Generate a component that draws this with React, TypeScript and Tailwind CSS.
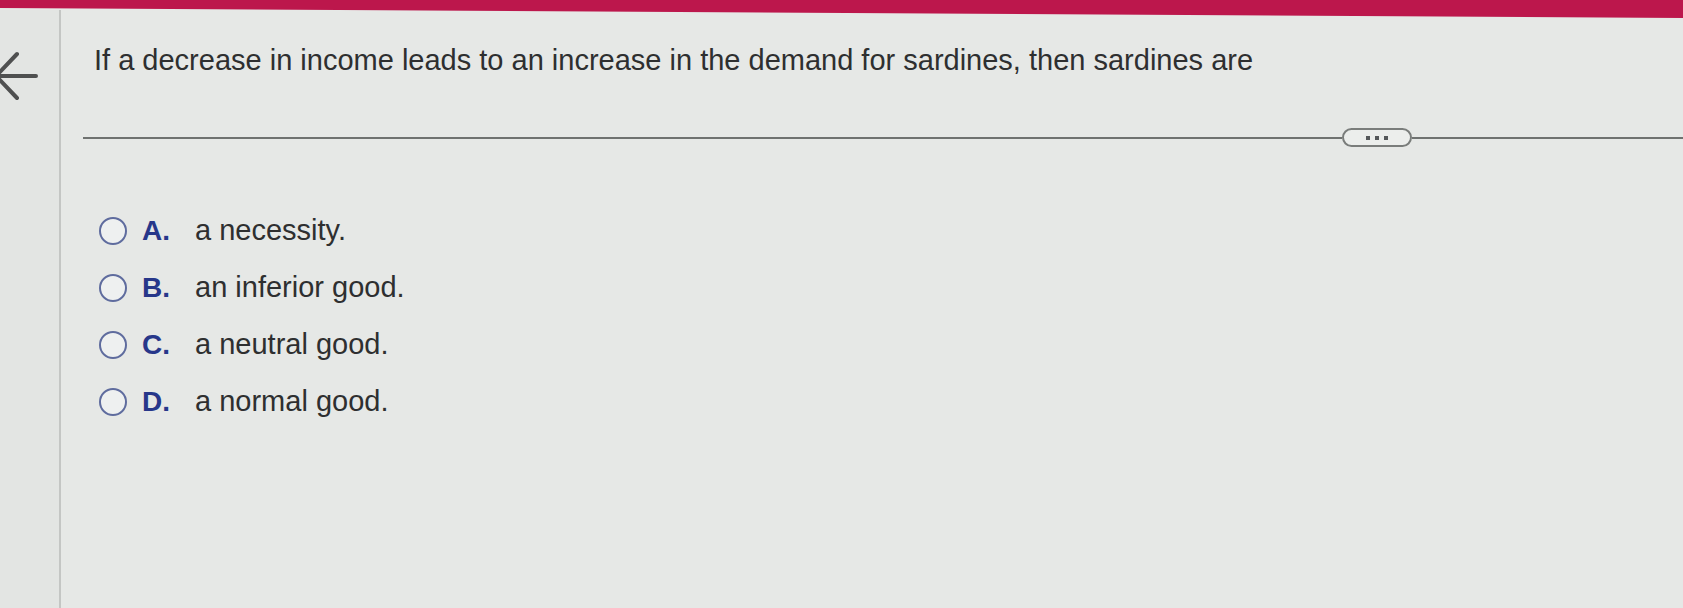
const OPTIONS = [
  { key: 'A', text: 'a necessity.' },
  { key: 'B', text: 'an inferior good.' },
  { key: 'C', text: 'a neutral good.' },
  { key: 'D', text: 'a normal good.' },
];

function BackArrow() {
  return (
    <svg aria-hidden="true" width="40" height="60" viewBox="0 0 40 60" className="text-[#4f5050]">
      <path d="M-4 22h40M-4 22L17 0M-4 22l21 22" fill="none" stroke="currentColor" strokeWidth={4} strokeLinecap="round" transform="translate(0 8)" />
    </svg>
  );
}

function Divider() {
  return (
    <div className="flex items-center ml-[22px] mt-[52px]">
      <div className="h-[2px] flex-1 bg-[#6f7270]" />
      <button
        type="button"
        className="flex items-center justify-center gap-[5px] w-[70px] h-[19px] rounded-full border-2 border-[#7a7d7b] bg-[#eceeec]"
      >
        <span className="w-[4px] h-[4px] bg-[#55585a]" />
        <span className="w-[4px] h-[4px] bg-[#55585a]" />
        <span className="w-[4px] h-[4px] bg-[#55585a]" />
      </button>
      <div className="h-[2px] w-[271px] bg-[#6f7270]" />
    </div>
  );
}

export default function App() {
  return (
    <div className="w-[1683px] h-[608px] overflow-hidden bg-[#e6e8e6] font-['Liberation_Sans',Arial,sans-serif] flex flex-col">
      <div className="h-[18px] bg-[#bc174c] [clip-path:polygon(0_0,100%_0,100%_100%,0_45%)] shrink-0" />
      <div className="flex flex-1 -mt-[8px]">
        <aside className="w-[61px] shrink-0 border-r-2 border-[#c4c6c4] bg-[#e3e5e3] pt-[36px]">
          <BackArrow />
        </aside>
        <main className="flex-1">
          <h1 className="pl-[33px] pt-[34px] text-[29px] leading-[32px] text-[#2e2f30]">
            If a decrease in income leads to an increase in the demand for sardines, then sardines are
          </h1>
          <Divider />
          <ul className="pl-[38px] pt-[68px] flex flex-col gap-[25px]">
            {OPTIONS.map((o) => (
              <li key={o.key} className="flex items-center h-[32px]">
                <span className="w-[28px] h-[28px] rounded-full border-[2.5px] border-[#5f6c9e] bg-[#eef0f0] shrink-0" />
                <span className="ml-[15px] w-[53px] text-[28px] font-bold text-[#27378a]">{o.key}.</span>
                <span className="text-[29px] text-[#2e2f30]">{o.text}</span>
              </li>
            ))}
          </ul>
        </main>
      </div>
    </div>
  );
}
